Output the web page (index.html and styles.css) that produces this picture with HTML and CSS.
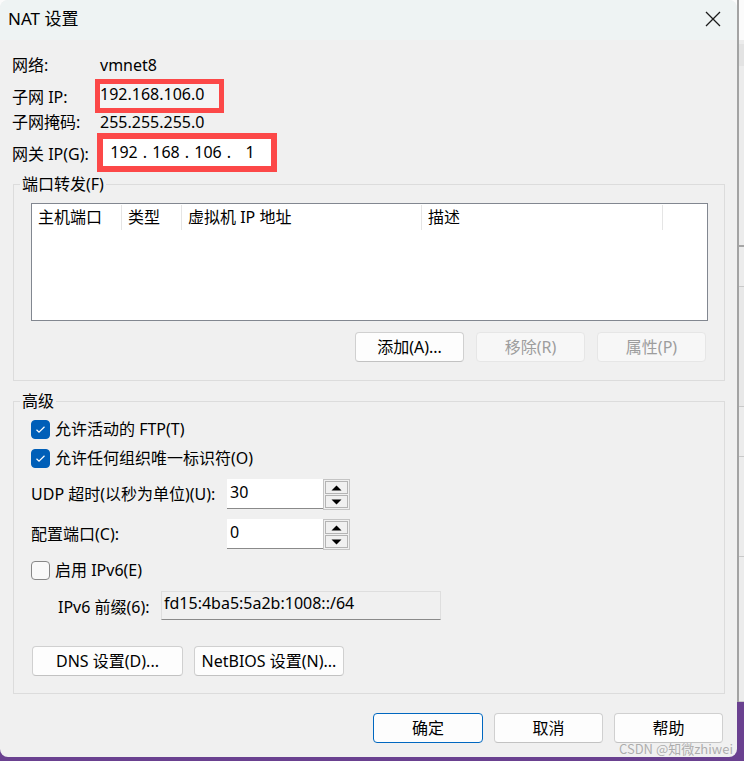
FILE: index.html
```html
<!DOCTYPE html>
<html lang="zh-CN">
<head>
<meta charset="utf-8">
<title>NAT 设置</title>
<link rel="stylesheet" href="styles.css">
</head>
<body>
<div class="screen">
  <div class="stage">
    <div class="dialog">
      <div class="titlebar">
        <span class="title">NAT 设置</span>
        <svg class="close" width="16" height="16" viewBox="0 0 16 16"><path d="M1 1 L15 15 M15 1 L1 15" stroke="#1b1b1b" stroke-width="1.3" fill="none"/></svg>
      </div>
      <div class="body">
        <div class="info">
          <div class="row r1"><span class="lbl w88">网络:</span><span>vmnet8</span></div>
          <div class="row r2"><span class="lbl w83">子网 IP:</span><span class="hl hl-subnet">192.168.106.0</span></div>
          <div class="row r3"><span class="lbl w88">子网掩码:</span><span>255.255.255.0</span></div>
          <div class="row r4"><span class="lbl w85">网关 IP(G):</span>
            <span class="hl hl-gw"><span class="ipbox"><span class="oct">192</span><span class="dot">.</span><span class="oct">168</span><span class="dot">.</span><span class="oct">106</span><span class="dot">.</span><span class="oct">1</span></span></span>
          </div>
        </div>

        <fieldset class="group">
          <legend>端口转发(F)</legend>
          <div class="port-inner">
            <div class="listview">
              <div class="lv-head">
                <span class="col c1">主机端口</span>
                <span class="col c2">类型</span>
                <span class="col c3">虚拟机 IP 地址</span>
                <span class="col c4">描述</span>
              </div>
            </div>
            <div class="btn-row">
              <span class="btn">添加(A)...</span>
              <span class="btn disabled">移除(R)</span>
              <span class="btn disabled">属性(P)</span>
            </div>
          </div>
        </fieldset>

        <fieldset class="group adv">
          <legend>高级</legend>
          <div class="adv-inner">
            <div class="cb-row">
              <span class="cb checked"><svg width="19" height="19" viewBox="0 0 19 19"><path d="M5.5 9.8 L8 12.2 L13.5 6.8" stroke="#fff" stroke-width="1.2" fill="none"/></svg></span>
              <span class="cb-label">允许活动的 FTP(T)</span>
            </div>
            <div class="cb-row cb2">
              <span class="cb checked"><svg width="19" height="19" viewBox="0 0 19 19"><path d="M5.5 9.8 L8 12.2 L13.5 6.8" stroke="#fff" stroke-width="1.2" fill="none"/></svg></span>
              <span class="cb-label">允许任何组织唯一标识符(O)</span>
            </div>
            <div class="spin-row udp">
              <span class="spin-label">UDP 超时(以秒为单位)(U):</span>
              <span class="spin-input">30</span>
              <span class="spinner">
                <span class="sb"><svg width="11" height="6" viewBox="0 0 11 6"><path d="M5.5 0.5 L10.5 5.5 L0.5 5.5 Z" fill="#000"/></svg></span>
                <span class="sb"><svg width="11" height="6" viewBox="0 0 11 6"><path d="M0.5 0.5 L10.5 0.5 L5.5 5.5 Z" fill="#000"/></svg></span>
              </span>
            </div>
            <div class="spin-row port">
              <span class="spin-label">配置端口(C):</span>
              <span class="spin-input">0</span>
              <span class="spinner">
                <span class="sb"><svg width="11" height="6" viewBox="0 0 11 6"><path d="M5.5 0.5 L10.5 5.5 L0.5 5.5 Z" fill="#000"/></svg></span>
                <span class="sb"><svg width="11" height="6" viewBox="0 0 11 6"><path d="M0.5 0.5 L10.5 0.5 L5.5 5.5 Z" fill="#000"/></svg></span>
              </span>
            </div>
            <div class="cb-row ipv6">
              <span class="cb"></span>
              <span class="cb-label">启用 IPv6(E)</span>
            </div>
            <div class="prefix-row">
              <span class="prefix-label">IPv6 前缀(6):</span>
              <span class="prefix-input">fd15:4ba5:5a2b:1008::/64</span>
            </div>
            <div class="dns-row">
              <span class="btn b-dns">DNS 设置(D)...</span>
              <span class="btn b-nb">NetBIOS 设置(N)...</span>
            </div>
          </div>
        </fieldset>

        <div class="footer">
          <span class="btn b-foot default">确定</span>
          <span class="btn b-foot">取消</span>
          <span class="btn b-foot">帮助</span>
        </div>
      </div>
      <span class="watermark">CSDN @知微zhiwei</span>
    </div>
    <div class="side">
      <div class="s-top"></div>
      <div class="s-a"></div>
      <div class="s-b"></div>
      <div class="s-c"></div>
      <div class="s-d"></div>
      <div class="s-e"></div>
      <div class="s-f"></div>
      <div class="s-g"></div>
    </div>
  </div>
</div>
</body>
</html>
```

FILE: styles.css
```css
* { box-sizing: border-box; }

html, body {
  margin: 0;
  padding: 0;
}

body {
  font-family: "Noto Sans", "Noto Sans CJK SC", sans-serif;
  font-size: 16px;
  color: #000;
}

.screen {
  width: 744px;
  height: 761px;
  overflow: hidden;
  background: linear-gradient(to bottom, #fbfbfb 0, #fbfbfb 700px, #6a4190 700px);
}

.stage {
  display: flex;
  height: 761px;
}

.dialog {
  position: relative;
  width: 737px;
  height: 757px;
  flex: none;
  background: #f0f0f0;
  border-radius: 8px;
  overflow: hidden;
  display: flex;
  flex-direction: column;
}

.titlebar {
  height: 40px;
  flex: none;
  background: #eef3f3;
  display: flex;
  align-items: center;
  justify-content: space-between;
  padding: 0 16px 0 8px;
}

.title {
  font-size: 17px;
  line-height: 20px;
  margin-top: -2px;
}

.close { display: block; margin-top: -2px; }

.body {
  padding: 12px 12px 0 12px;
}

.row {
  display: flex;
  align-items: center;
}

.lbl { flex: none; }
.w88 { width: 88px; }
.w83 { width: 83px; }
.w85 { width: 85px; }

.r1 { height: 26px; line-height: 26px; }

.r2 { margin-top: 1px; }

.hl { border: 5px solid #fc4848; }

.hl-subnet {
  width: 129px;
  height: 34px;
  line-height: 20px;
  padding: 0 0 4px 0;
  background: #f4f4f4;
  white-space: nowrap;
}

.r3 { height: 18px; line-height: 18px; }

.r4 { margin-top: 2px; }

.hl-gw {
  border-width: 6px;
  width: 180px;
  height: 39px;
  display: flex;
}

.ipbox {
  flex: 1;
  background: #fff;
  display: flex;
  padding-left: 4px;
  line-height: 27px;
}

.oct { width: 34px; text-align: center; }
.dot { width: 8px; text-align: center; }

.group {
  margin: 3px 0 0 1px;
  padding: 0;
  border: 1px solid #dcdcdc;
  min-width: 0;
}

.group legend {
  margin-left: 6px;
  padding: 0 2px;
  line-height: 18px;
}

.port-inner {
  padding: 10px 16px 18px 17px;
}

.listview {
  height: 118px;
  border: 1px solid #828790;
  background: #fff;
}

.lv-head {
  display: flex;
  height: 26px;
  padding-top: 1px;
}

.col {
  padding-left: 6px;
  line-height: 24px;
  border-right: 1px solid #e5e5e5;
  white-space: nowrap;
}

.c1 { width: 90px; }
.c2 { width: 60px; }
.c3 { width: 240px; }
.c4 { width: 241px; }

.btn-row {
  display: flex;
  justify-content: flex-end;
  gap: 12px;
  margin-top: 11px;
  padding-right: 2px;
}

.btn {
  display: block;
  width: 109px;
  height: 30px;
  border: 1px solid #d0d0d0;
  border-bottom-color: #c2c2c2;
  border-radius: 4px;
  background: #fdfdfd;
  text-align: center;
  line-height: 28px;
  white-space: nowrap;
}

.btn.disabled {
  background: #f7f7f7;
  border-color: #e6e6e6;
  color: #9d9d9d;
}

.adv { margin-top: 11px; }

.adv-inner {
  padding: 10px 16px 17px 17px;
}

.cb-row {
  display: flex;
  align-items: center;
  height: 19px;
}

.cb {
  width: 19px;
  height: 19px;
  flex: none;
  border-radius: 4px;
  border: 1px solid #878787;
  background: #f9f9f9;
}

.cb.checked {
  background: #005fb8;
  border-color: #005fb8;
}

.cb svg { display: block; margin: -1px; }

.cb-label {
  margin-left: 5px;
  line-height: 19px;
}

.cb2 { margin-top: 10px; }

.spin-row {
  display: flex;
  align-items: flex-start;
  height: 30px;
}

.udp { margin-top: 11px; }
.port { margin-top: 10px; }

.spin-label {
  width: 196px;
  flex: none;
  line-height: 30px;
  white-space: nowrap;
}

.spin-input {
  width: 96px;
  height: 30px;
  background: #fff;
  border-bottom: 1px solid #8a8a8a;
  padding-left: 3px;
  line-height: 26px;
}

.spinner {
  width: 27px;
  height: 31px;
  flex: none;
  border: 1px solid #c4c4c4;
  padding: 1px;
  display: flex;
  flex-direction: column;
  gap: 1px;
}

.sb {
  flex: 1;
  border: 1px solid #b4b4b4;
  background: #f0f0f0;
  display: flex;
  align-items: center;
  justify-content: center;
}

.sb svg { display: block; }

.ipv6 { margin-top: 12px; }

.prefix-row {
  display: flex;
  align-items: center;
  margin-top: 11px;
  padding-left: 27px;
}

.prefix-label {
  width: 103px;
  flex: none;
  white-space: nowrap;
}

.prefix-input {
  width: 280px;
  height: 29px;
  border: 1px solid #dedede;
  border-bottom-color: #8a8a8a;
  background: #f0f0f0;
  padding-left: 2px;
  line-height: 22px;
}

.dns-row {
  display: flex;
  gap: 11px;
  margin-top: 26px;
  padding-left: 1px;
}

.b-dns { width: 151px; }
.b-nb { width: 150px; }

.footer {
  display: flex;
  justify-content: flex-end;
  gap: 11px;
  margin-top: 19px;
  padding-right: 2px;
}

.b-foot { width: 109px; }

.btn.default {
  width: 110px;
  border-color: #0067c0;
}

.watermark {
  position: absolute;
  right: 4px;
  bottom: 2px;
  font-size: 13px;
  line-height: 12px;
  color: rgba(150, 150, 150, 0.75);
  font-family: "Noto Sans CJK SC", "Noto Sans", sans-serif;
}

.side {
  width: 7px;
  flex: none;
  height: 702px;
  border-left: 2px solid #a3a3a3;
  background: #ececec;
  display: flex;
  flex-direction: column;
}

.s-top { height: 40px; background: #fbfbfb; }
.s-a { height: 22px; margin-top: 4px; background: #e3e3e3; }
.s-b { height: 181px; border-bottom: 2px solid #a6a6a6; }
.s-c { height: 40px; border-bottom: 1px solid #c9c9c9; }
.s-d { height: 120px; border-bottom: 1px solid #c9c9c9; background: #e8e8e8; }
.s-e { height: 50px; border-bottom: 1px solid #c9c9c9; }
.s-f { height: 100px; border-bottom: 1px solid #c9c9c9; }
.s-g { flex: 1; border-bottom: 1px solid #c9c9c9; }
```
